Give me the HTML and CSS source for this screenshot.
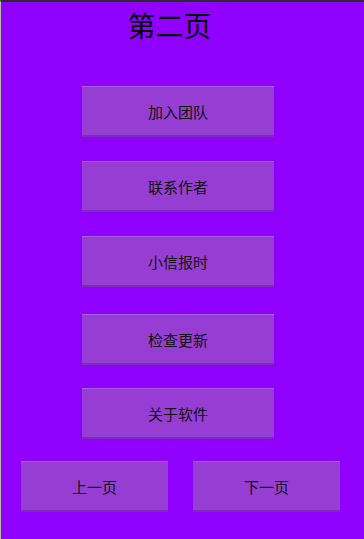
FILE: index.html
```html
<!DOCTYPE html>
<html lang="zh">
<head>
<meta charset="utf-8">
<title>第二页</title>
<link rel="stylesheet" href="styles.css">
</head>
<body>
<div class="screen">
  <h1 class="title">第二页</h1>
  <div class="menu">
    <button class="btn">加入团队</button>
    <button class="btn">联系作者</button>
    <button class="btn">小信报时</button>
    <button class="btn btn-wide-gap">检查更新</button>
    <button class="btn btn-narrow-gap">关于软件</button>
  </div>
  <div class="nav">
    <button class="btn btn-nav">上一页</button>
    <button class="btn btn-nav">下一页</button>
  </div>
</div>
</body>
</html>
```
FILE: styles.css
```css
html, body {
  margin: 0;
  padding: 0;
  height: 100%;
}
body {
  background: #8f00ff;
  font-family: "Noto Sans CJK SC", "Noto Sans", sans-serif;
}
.screen {
  box-sizing: border-box;
  height: 539px;
  border-top: 2px solid #2b2b2b;
  border-left: 1px solid #b9b9a6;
  background: #8f00ff;
  display: flex;
  flex-direction: column;
}
.title {
  margin: 0;
  padding: 9px 26px 0 0;
  height: 75px;
  box-sizing: border-box;
  text-align: center;
  font-size: 28px;
  font-weight: normal;
  line-height: 28px;
  color: #000;
}
.menu {
  display: flex;
  flex-direction: column;
  align-items: center;
  gap: 24px;
  padding: 0 8px 0 0;
  margin-left: -1px;
  margin-top: 9px;
}
.btn {
  box-sizing: border-box;
  width: 192px;
  height: 51px;
  margin: 0;
  padding: 0;
  border: none;
  border-top: 1px solid #a55de0;
  border-bottom: 2px solid #7b2cb8;
  background: #963dd3;
  color: #111;
  font-family: "Noto Sans CJK SC", "Noto Sans", sans-serif;
  font-size: 15px;
  line-height: 1;
  cursor: pointer;
}
.btn-wide-gap {
  margin-top: 3px;
}
.btn-narrow-gap {
  margin-top: -1px;
}
.nav {
  display: flex;
  gap: 25px;
  padding-left: 20px;
  margin-top: 22px;
}
.btn-nav {
  width: 147px;
}
```
